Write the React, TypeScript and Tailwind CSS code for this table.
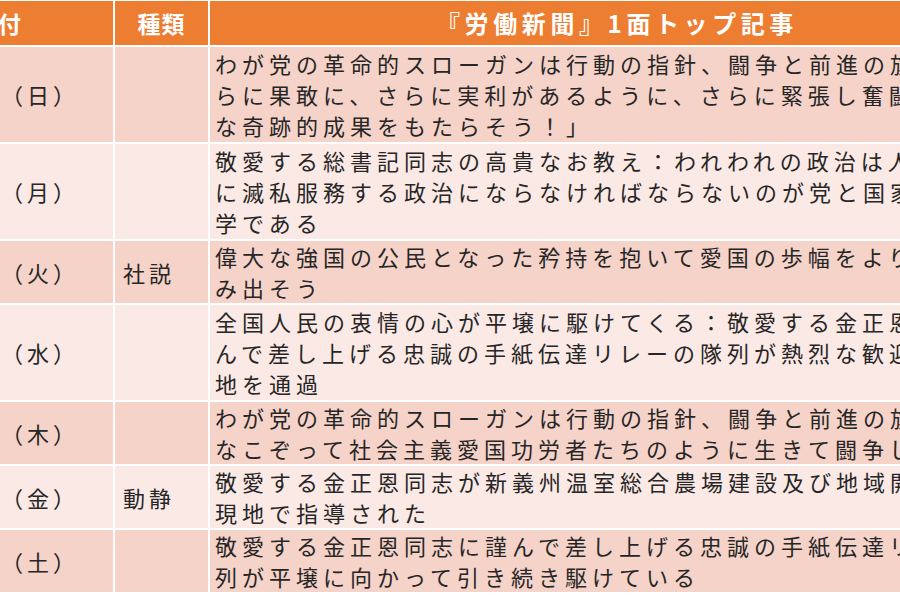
import React from "react";

type Row = { date: string; kind: string; lines: string[]; dark: boolean };

const rows: Row[] = [
  {
    date: "（日）",
    kind: "",
    dark: true,
    lines: [
      "わが党の革命的スローガンは行動の指針、闘争と前進の旗印",
      "らに果敢に、さらに実利があるように、さらに緊張し奮闘し",
      "な奇跡的成果をもたらそう！」",
    ],
  },
  {
    date: "（月）",
    kind: "",
    dark: false,
    lines: [
      "敬愛する総書記同志の高貴なお教え：われわれの政治は人民",
      "に滅私服務する政治にならなければならないのが党と国家の",
      "学である",
    ],
  },
  {
    date: "（火）",
    kind: "社説",
    dark: true,
    lines: [
      "偉大な強国の公民となった矜持を抱いて愛国の歩幅をより力",
      "み出そう",
    ],
  },
  {
    date: "（水）",
    kind: "",
    dark: false,
    lines: [
      "全国人民の衷情の心が平壌に駆けてくる：敬愛する金正恩同",
      "んで差し上げる忠誠の手紙伝達リレーの隊列が熱烈な歓迎の",
      "地を通過",
    ],
  },
  {
    date: "（木）",
    kind: "",
    dark: true,
    lines: [
      "わが党の革命的スローガンは行動の指針、闘争と前進の旗印",
      "なこぞって社会主義愛国功労者たちのように生きて闘争しよ",
    ],
  },
  {
    date: "（金）",
    kind: "動静",
    dark: false,
    lines: [
      "敬愛する金正恩同志が新義州温室総合農場建設及び地域開発",
      "現地で指導された",
    ],
  },
  {
    date: "（土）",
    kind: "",
    dark: true,
    lines: [
      "敬愛する金正恩同志に謹んで差し上げる忠誠の手紙伝達リレ",
      "列が平壌に向かって引き続き駆けている",
    ],
  },
];

const font = {
  fontFamily: '"Noto Sans CJK JP", "Noto Sans", sans-serif',
};

export default function App() {
  return (
    <div
      className="w-[900px] h-[600px] overflow-hidden bg-white pt-[1px]"
      style={font}
    >
      <div className="grid w-[1040px] grid-cols-[113px_93px_830px] gap-[2px] bg-white">
        {/* header */}
        <div className="h-[44px] bg-[#ED7D31] overflow-hidden flex items-center text-white font-bold text-[23px] whitespace-nowrap">
          <span className="-ml-[26px] tracking-[1px]">日付</span>
        </div>
        <div className="h-[44px] bg-[#ED7D31] flex items-center justify-center text-white font-bold text-[23px] tracking-[1px]">
          種類
        </div>
        <div className="h-[44px] bg-[#ED7D31] flex items-center justify-center pr-[16px] text-white font-bold text-[24px] tracking-[4.6px] whitespace-nowrap">
          『労働新聞』1面トップ記事
        </div>

        {rows.map((r, i) => {
          const bg = r.dark ? "bg-[#F5D3C9]" : "bg-[#FBE9E5]";
          const h = r.lines.length === 3 ? "h-[95px]" : "h-[62px]";
          return (
            <React.Fragment key={i}>
              <div
                className={`${bg} ${h} flex items-center overflow-hidden text-[22px] text-[#262626] whitespace-nowrap`}
              >
                <span className="pl-[1px] tracking-[4px]">{r.date}</span>
              </div>
              <div
                className={`${bg} ${h} flex items-center pl-[8px] text-[22px] text-[#262626] tracking-[4px]`}
              >
                {r.kind}
              </div>
              <div
                className={`${bg} ${h} flex flex-col justify-center pl-[5px] text-[22px] leading-[31px] text-[#262626] tracking-[5px] whitespace-nowrap overflow-hidden`}
              >
                {r.lines.map((l, j) => (
                  <div key={j}>{l}</div>
                ))}
              </div>
            </React.Fragment>
          );
        })}
      </div>
    </div>
  );
}
